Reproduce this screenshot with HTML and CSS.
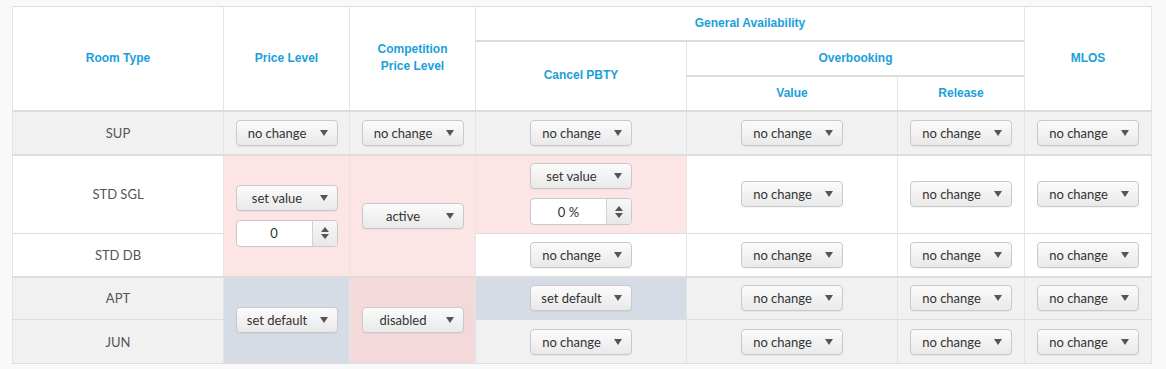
FILE: index.html
```html
<!DOCTYPE html>
<html lang="en">
<head>
    <meta charset="UTF-8">
    <meta name="viewport" content="width=device-width, initial-scale=1.0">
    <title>Room Restrictions</title>
    <link rel="stylesheet" href="styles.css">
</head>
<body>
    <table class="grid">
        <colgroup>
            <col class="c-room">
            <col class="c-mid">
            <col class="c-mid">
            <col class="c-wide">
            <col class="c-wide">
            <col class="c-narrow">
            <col class="c-narrow">
        </colgroup>
        <thead>
            <tr class="h1">
                <th rowspan="3" class="head-end">Room Type</th>
                <th rowspan="3" class="head-end">Price Level</th>
                <th rowspan="3" class="head-end">Competition<br>Price Level</th>
                <th colspan="3" class="group">General Availability</th>
                <th rowspan="3" class="head-end">MLOS</th>
            </tr>
            <tr class="h2">
                <th rowspan="2" class="head-end">Cancel PBTY</th>
                <th colspan="2" class="group">Overbooking</th>
            </tr>
            <tr class="h3">
                <th class="head-end">Value</th>
                <th class="head-end">Release</th>
            </tr>
        </thead>
        <tbody class="grey group-end">
            <tr class="r-short r-edge">
                <td class="room">SUP</td>
                <td><div class="dd"><span class="dd-label">no change</span><span class="caret"></span></div></td>
                <td><div class="dd"><span class="dd-label">no change</span><span class="caret"></span></div></td>
                <td><div class="dd"><span class="dd-label">no change</span><span class="caret"></span></div></td>
                <td><div class="dd"><span class="dd-label">no change</span><span class="caret"></span></div></td>
                <td><div class="dd"><span class="dd-label">no change</span><span class="caret"></span></div></td>
                <td><div class="dd"><span class="dd-label">no change</span><span class="caret"></span></div></td>
            </tr>
        </tbody>
        <tbody class="white group-end">
            <tr class="r-tall">
                <td class="room">STD SGL</td>
                <td rowspan="2" class="pink">
                    <div class="stack">
                        <div class="dd"><span class="dd-label">set value</span><span class="caret"></span></div>
                        <div class="num"><span class="num-value">0</span><span class="spin"><span class="up"></span><span class="down"></span></span></div>
                    </div>
                </td>
                <td rowspan="2" class="pink">
                    <div class="dd"><span class="dd-label">active</span><span class="caret"></span></div>
                </td>
                <td class="pink">
                    <div class="stack">
                        <div class="dd"><span class="dd-label">set value</span><span class="caret"></span></div>
                        <div class="num"><span class="num-value">0 %</span><span class="spin"><span class="up"></span><span class="down"></span></span></div>
                    </div>
                </td>
                <td><div class="dd"><span class="dd-label">no change</span><span class="caret"></span></div></td>
                <td><div class="dd"><span class="dd-label">no change</span><span class="caret"></span></div></td>
                <td><div class="dd"><span class="dd-label">no change</span><span class="caret"></span></div></td>
            </tr>
            <tr class="r-short">
                <td class="room">STD DB</td>
                <td><div class="dd"><span class="dd-label">no change</span><span class="caret"></span></div></td>
                <td><div class="dd"><span class="dd-label">no change</span><span class="caret"></span></div></td>
                <td><div class="dd"><span class="dd-label">no change</span><span class="caret"></span></div></td>
                <td><div class="dd"><span class="dd-label">no change</span><span class="caret"></span></div></td>
            </tr>
        </tbody>
        <tbody class="grey">
            <tr class="r-short">
                <td class="room">APT</td>
                <td rowspan="2" class="slate">
                    <div class="dd"><span class="dd-label">set default</span><span class="caret"></span></div>
                </td>
                <td rowspan="2" class="rose">
                    <div class="dd"><span class="dd-label">disabled</span><span class="caret"></span></div>
                </td>
                <td class="slate"><div class="dd"><span class="dd-label">set default</span><span class="caret"></span></div></td>
                <td><div class="dd"><span class="dd-label">no change</span><span class="caret"></span></div></td>
                <td><div class="dd"><span class="dd-label">no change</span><span class="caret"></span></div></td>
                <td><div class="dd"><span class="dd-label">no change</span><span class="caret"></span></div></td>
            </tr>
            <tr class="r-short r-edge">
                <td class="room">JUN</td>
                <td><div class="dd"><span class="dd-label">no change</span><span class="caret"></span></div></td>
                <td><div class="dd"><span class="dd-label">no change</span><span class="caret"></span></div></td>
                <td><div class="dd"><span class="dd-label">no change</span><span class="caret"></span></div></td>
                <td><div class="dd"><span class="dd-label">no change</span><span class="caret"></span></div></td>
            </tr>
        </tbody>
    </table>
</body>
</html>
```

FILE: styles.css
```css
:root {
    --head-color: #1ba0db;
    --line-color: #dddddd;
    --col-line: #e4e4e4;
    --row-grey: #f1f1f1;
    --pink: #fde4e5;
    --rose: #f4d9da;
    --slate: #d6dce6;
}

body {
    margin: 0;
    padding: 6px 0 0 12px;
    background-color: #f9f9f9;
    font-family: Lato, "Open Sans", sans-serif;
    font-size: 13px;
    color: #444;
}

.grid {
    width: 1140px;
    table-layout: fixed;
    border-collapse: collapse;
    border: 1px solid var(--line-color);
}

.c-room { width: 211px; }
.c-mid { width: 126px; }
.c-wide { width: 211px; }
.c-narrow { width: 127px; }

th, td {
    padding: 0;
    text-align: center;
    vertical-align: middle;
    border-left: 1px solid var(--col-line);
    border-right: 1px solid var(--col-line);
}

th {
    background-color: #fff;
    color: var(--head-color);
    font-family: "Liberation Sans", Arial, sans-serif;
    font-weight: bold;
    font-size: 12px;
    line-height: 17px;
}

th.group {
    border-bottom: 2px solid var(--line-color);
}

th.head-end {
    border-bottom: 2px solid var(--line-color);
}

.h1 { height: 34px; }
.h2 { height: 35px; }
.h3 { height: 35px; }

.r-short { height: 43px; }
.r-edge { height: 44px; }
.r-tall { height: 79px; }

tbody tr + tr td {
    border-top: 1px solid var(--line-color);
}

tbody.group-end tr:last-child td,
tbody.group-end td[rowspan] {
    border-bottom: 2px solid var(--line-color);
}

.grey td { background-color: var(--row-grey); }
.white td { background-color: #fff; }

.grid td.pink { background-color: var(--pink); }
.grid td.rose { background-color: var(--rose); }
.grid td.slate { background-color: var(--slate); }

.room {
    color: #555;
}

.stack {
    display: flex;
    flex-direction: column;
    align-items: center;
    gap: 9px;
}

.dd {
    display: inline-flex;
    align-items: center;
    box-sizing: border-box;
    width: 102px;
    height: 26px;
    padding: 0 9px 0 4px;
    border: 1px solid #c9c9c9;
    border-radius: 4px;
    background: linear-gradient(#fbfbfb, #e9e9e9);
    box-shadow: 0 1px 1px rgba(0, 0, 0, 0.05);
    color: #333;
    vertical-align: middle;
}

.dd-label {
    flex: 1;
    text-align: center;
    white-space: nowrap;
}

.caret {
    margin-left: 6px;
    width: 0;
    height: 0;
    border-left: 4px solid transparent;
    border-right: 4px solid transparent;
    border-top: 6px solid #555;
}

.num {
    display: inline-flex;
    box-sizing: border-box;
    width: 102px;
    height: 27px;
    border: 1px solid #c9c9c9;
    border-radius: 4px;
    background-color: #fff;
    overflow: hidden;
}

.num-value {
    flex: 1;
    display: flex;
    align-items: center;
    justify-content: center;
    color: #333;
}

.spin {
    width: 24px;
    display: flex;
    flex-direction: column;
    align-items: center;
    justify-content: center;
    gap: 2px;
    border-left: 1px solid #d2d2d2;
    background: linear-gradient(#f7f7f7, #e8e8e8);
}

.up, .down {
    width: 0;
    height: 0;
    border-left: 4px solid transparent;
    border-right: 4px solid transparent;
}

.up { border-bottom: 5px solid #555; }
.down { border-top: 5px solid #555; }
```
